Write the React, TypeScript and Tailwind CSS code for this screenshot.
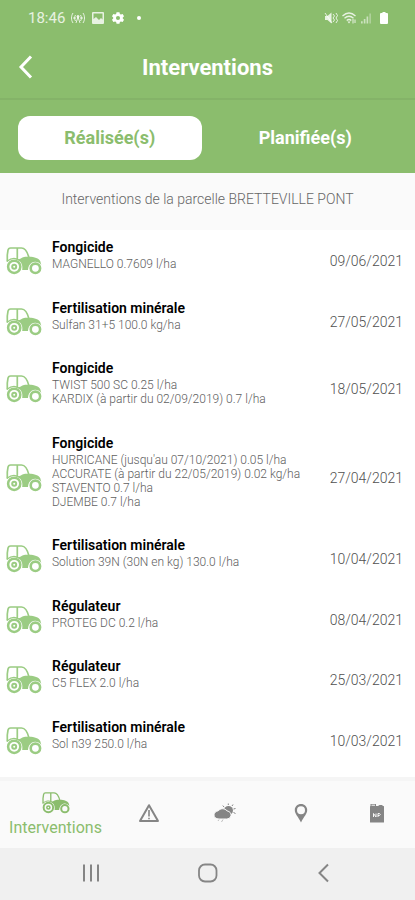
import { useState } from "react";

type Intervention = { kind: string; products: string[]; date: string };

const interventions: Intervention[] = [
  { kind: "Fongicide", products: ["MAGNELLO 0.7609 l/ha"], date: "09/06/2021" },
  { kind: "Fertilisation minérale", products: ["Sulfan 31+5 100.0 kg/ha"], date: "27/05/2021" },
  {
    kind: "Fongicide",
    products: ["TWIST 500 SC 0.25 l/ha", "KARDIX (à partir du 02/09/2019) 0.7 l/ha"],
    date: "18/05/2021",
  },
  {
    kind: "Fongicide",
    products: [
      "HURRICANE (jusqu'au 07/10/2021) 0.05 l/ha",
      "ACCURATE (à partir du 22/05/2019) 0.02 kg/ha",
      "STAVENTO 0.7 l/ha",
      "DJEMBE 0.7 l/ha",
    ],
    date: "27/04/2021",
  },
  { kind: "Fertilisation minérale", products: ["Solution 39N (30N en kg) 130.0 l/ha"], date: "10/04/2021" },
  { kind: "Régulateur", products: ["PROTEG DC 0.2 l/ha"], date: "08/04/2021" },
  { kind: "Régulateur", products: ["C5 FLEX 2.0 l/ha"], date: "25/03/2021" },
  { kind: "Fertilisation minérale", products: ["Sol n39 250.0 l/ha"], date: "10/03/2021" },
];

function Tractor({ className }: { className: string }) {
  return (
    <svg viewBox="0 0 36 28" className={className} fill="none" aria-hidden="true">
      {/* cab */}
      <path
        d="M1.300 14V8L2 3.200Q2.400 1 4.500 1H15.500C19 1 21.500 5 23 11M11.300 1.500V11.500"
        stroke="currentColor"
        strokeWidth="1.700"
        strokeLinecap="round"
      />
      {/* fender over the rear wheel */}
      <path d="M1 14.200Q8 8.500 14.500 14" stroke="currentColor" strokeWidth="1.200" />
      {/* hood and chassis */}
      <path
        d="M10.500 11.500C12.500 12.800 14.200 12 16 10.800C18.500 9.200 20.800 9.800 23 9.800C28.500 9.800 33 11.400 34.300 14.200L35.300 18C32.800 14.600 28.700 13.800 25.600 15.800C23.300 17.400 22.200 20 22 23H16.200C17.200 17.200 14.400 13 9.400 12.200Z"
        fill="currentColor"
      />
      {/* rear wheel */}
      <circle cx="8.200" cy="19.800" r="6.100" stroke="currentColor" strokeWidth="2.500" />
      <circle cx="8.200" cy="19.800" r="2" stroke="currentColor" strokeWidth="2" />
      {/* front wheel */}
      <circle cx="29.400" cy="21.300" r="4.700" stroke="currentColor" strokeWidth="2.600" />
    </svg>
  );
}

function StatusBar() {
  return (
    <div className="flex h-9 items-center justify-between pl-7 pr-[27px] text-white/80">
      <div className="flex items-center gap-1.5">
        <span className="text-[15px]">18:46</span>
        <svg viewBox="0 0 14 12" className="h-3 w-3.5" fill="none" stroke="currentColor" aria-hidden="true">
          <path d="M2 1C0 4 0 8 2 11M4.5 3C3.3 5 3.3 7 4.5 9M12 1C14 4 14 8 12 11M9.5 3C10.700 5 10.700 7 9.500 9M5 11L7 5L9 11M2 6H5M9 6H12" />
          <circle cx="7" cy="4.500" r="1" fill="currentColor" />
        </svg>
        <svg viewBox="0 0 14 12" className="h-3 w-3.5" aria-hidden="true">
          <path
            fill="currentColor"
            fillRule="evenodd"
            d="M2 0H12Q13 0 13 1V11Q13 12 12 12H2Q1 12 1 11V1Q1 0 2 0ZM2.500 1.500V7L5 5L8 8L10 6L11.500 7.500V1.500Z"
          />
        </svg>
        <svg viewBox="0 0 24 24" className="h-3.5 w-3.5" aria-hidden="true">
          <path
            fill="white"
            fillRule="evenodd"
            d="M9.500 2H14.500L15.200 5L17 6L20 5L22.300 9L20.200 11.200V12.800L22.300 15L20 19L17 18L15.200 19L14.500 22H9.500L8.800 19L7 18L4 19L1.700 15L3.800 12.800V11.200L1.700 9L4 5L7 6L8.800 5ZM12 8.500A3.500 3.500 0 1 0 12 15.500A3.500 3.500 0 1 0 12 8.500Z"
          />
        </svg>
        <span className="ml-1.5 h-1 w-1 rounded-full bg-white" />
      </div>
      <div className="flex items-center gap-1">
        <svg viewBox="0 0 14 12" className="h-3 w-3.5" aria-hidden="true">
          <path fill="currentColor" d="M1 4H3.500L7.500 0.500V11.500L3.500 8H1Z" />
          <path stroke="currentColor" fill="none" d="M1 1L8 11M9 2L10.500 4L9 6L10.500 8L9 10M12 1L13.500 3.500L12 6L13.500 8.500L12 11" />
        </svg>
        <svg viewBox="0 0 14 12" className="h-3 w-3.5" aria-hidden="true">
          <path fill="none" stroke="currentColor" strokeWidth="1.300" d="M0.500 4Q7 -2 13.500 4M2.500 6.300Q7 2.300 11.500 6.300M4.700 8.500Q7 6.500 9.300 8.500" />
          <path fill="currentColor" d="M5.500 9.500H8.500L7 11.500Z" />
          <path stroke="currentColor" d="M11 7V11.500M13 7.500V11" />
        </svg>
        <svg viewBox="0 0 13 12" className="h-3 w-3" aria-hidden="true">
          <path stroke="currentColor" strokeWidth="1.800" opacity="0.7" d="M2 9.500V12M5 7V12M8 4.500V12" />
          <path stroke="currentColor" strokeWidth="1.800" opacity="0.4" d="M11 1V12" />
        </svg>
        <svg viewBox="0 0 8 12" className="ml-1 h-3 w-2" aria-hidden="true">
          <path fill="white" d="M2.500 0H5.500V1H7Q8 1 8 2V11Q8 12 7 12H1Q0 12 0 11V2Q0 1 1 1H2.500Z" />
        </svg>
      </div>
    </div>
  );
}

function InterventionRow({ item }: { item: Intervention }) {
  return (
    <li className="flex grow items-center pl-1.5 pr-3">
      <Tractor className="h-7 w-9 shrink-0 text-[#9bcc83]" />
      <div className="min-w-0 grow pb-5 pl-2.5 pt-[7px]">
        <h2 className="mb-px text-sm font-semibold leading-[18px] text-black">{item.kind}</h2>
        {item.products.map((product) => (
          <p key={product} className="text-xs font-light leading-[14px] text-[#606060]">
            {product}
          </p>
        ))}
      </div>
      <time className="shrink-0 text-sm font-light text-[#505050]">{item.date}</time>
    </li>
  );
}

function BottomTabs() {
  return (
    <nav className="grid h-[71px] shrink-0 grid-cols-[111px_1fr_1fr_1fr_1fr] border-t-4 border-[#f5f5f5] bg-[#fafafa] text-[#858585]">
      <button className="flex flex-col items-center pt-2.5 text-[#8bbd6d]">
        <Tractor className="h-6 w-7" />
        <span className="text-base leading-[26px]">Interventions</span>
      </button>
      <button className="flex items-center justify-center pb-1" aria-label="Alertes">
        <svg viewBox="0 0 22 20" className="h-5 w-[22px]" fill="none" stroke="currentColor" aria-hidden="true">
          <path strokeWidth="2" strokeLinejoin="round" d="M11 2.200L20 18H2Z" />
          <path strokeWidth="1.600" d="M11 7V13.500M11 14.700V16.300" />
        </svg>
      </button>
      <button className="flex items-center justify-center pb-1" aria-label="Météo">
        <svg viewBox="0 0 22 20" className="h-5 w-[22px]" aria-hidden="true">
          <circle cx="14.500" cy="7.500" r="4.500" fill="currentColor" />
          <path stroke="currentColor" d="M10 4L8.800 2.600M14.300 2V0.500M18 3L19 1.500M19.500 6L21.500 5.500M19.500 9.500L21.500 10.500" />
          <path
            fill="currentColor"
            stroke="#fafafa"
            d="M5 16C2 16 -0.200 14.200 0 11.800C0.200 9.400 2.200 8.200 4.200 7.800C6.500 5.200 10.500 5 13 7.800C16 8.600 17.400 10.300 17 12.500C16.600 14.900 14.500 16 12.500 16Z"
          />
          <path stroke="currentColor" opacity="0.5" d="M5 16.500L4 18M9 16.500L7.500 19" />
        </svg>
      </button>
      <button className="flex items-center justify-center pb-1" aria-label="Carte">
        <svg viewBox="0 0 14 20" className="h-5 w-3.5" aria-hidden="true">
          <path
            fill="currentColor"
            fillRule="evenodd"
            d="M7 1C3.400 1 0.800 3.700 0.800 7.100C0.800 11 4 13.500 7 19.500C10 13.500 13.200 11 13.200 7.100C13.200 3.700 10.600 1 7 1ZM7 3.200A4 4 0 1 1 7 11.200A4 4 0 1 1 7 3.200Z"
          />
        </svg>
      </button>
      <button className="flex items-center justify-center pb-1" aria-label="Produits">
        <svg viewBox="0 0 16 20" className="h-5 w-4" aria-hidden="true">
          <path fill="currentColor" d="M1.500 1H7V3H9L10.500 2H13L14 3H14.500Q15 3 15 3.500V19Q15 19.500 14.500 19.500H1.500Q1 19.500 1 19V3.500Q1 3 1.500 3Z" />
          <path fill="none" stroke="#fafafa" strokeWidth="1" d="M4.500 14V10.500L7 14V10.500M9 14V10.500H10.500Q12 11.500 10.500 12.500H9M2.500 2.200H6" />
        </svg>
      </button>
    </nav>
  );
}

function SystemNav() {
  return (
    <div className="flex h-[52px] shrink-0 items-center justify-around bg-[#f0f0f0] px-8 pb-0.5 text-[#858585]">
      <button aria-label="Applications récentes">
        <svg viewBox="0 0 20 20" className="h-5 w-5" stroke="currentColor" strokeWidth="2" aria-hidden="true">
          <path d="M3 1.500V18.500M10 1.500V18.500M17 1.500V18.500" />
        </svg>
      </button>
      <button aria-label="Accueil">
        <svg viewBox="0 0 20 20" className="h-5 w-5" fill="none" stroke="currentColor" strokeWidth="1.800" aria-hidden="true">
          <rect x="1" y="1.500" width="17.500" height="17" rx="6" />
        </svg>
      </button>
      <button aria-label="Retour">
        <svg viewBox="0 0 20 20" className="h-5 w-5" fill="none" stroke="currentColor" strokeWidth="2" aria-hidden="true">
          <path d="M13 1.500L4.500 10L13 18.500" />
        </svg>
      </button>
    </div>
  );
}

export default function App() {
  const [done, setDone] = useState(true);
  const active = "bg-white text-[#8bbd6d]";
  const idle = "text-white";

  return (
    <div className="flex min-h-screen flex-col bg-white font-[Roboto,sans-serif]">
      <header className="bg-[#8bbd6d] text-white">
        <StatusBar />
        <div className="grid h-16 grid-cols-[48px_1fr_48px] items-center border-b-2 border-[#84b368]">
          <button className="pl-[17px]" aria-label="Retour">
            <svg viewBox="0 0 18 24" className="h-6 w-[18px]" fill="none" stroke="currentColor" strokeWidth="3" aria-hidden="true">
              <path d="M14 1.500L4 12L14 22.500" />
            </svg>
          </button>
          <h1 className="text-center text-[22px] font-bold">Interventions</h1>
        </div>
        <div className="grid h-[73px] grid-cols-2 items-center gap-3 px-[18px] pt-0.5">
          <button onClick={() => setDone(true)} className={`h-11 rounded-xl text-lg font-bold ${done ? active : idle}`}>
            Réalisée(s)
          </button>
          <button onClick={() => setDone(false)} className={`h-11 rounded-xl text-lg font-bold ${done ? idle : active}`}>
            Planifiée(s)
          </button>
        </div>
      </header>
      <p className="h-[57px] bg-[#fafafa] pt-4 text-center text-sm font-light text-[#666666]">
        Interventions de la parcelle BRETTEVILLE PONT
      </p>
      <ul className="flex grow flex-col pb-1.5 pt-px">
        {interventions.map((item) => (
          <InterventionRow key={item.date} item={item} />
        ))}
      </ul>
      <BottomTabs />
      <SystemNav />
    </div>
  );
}
